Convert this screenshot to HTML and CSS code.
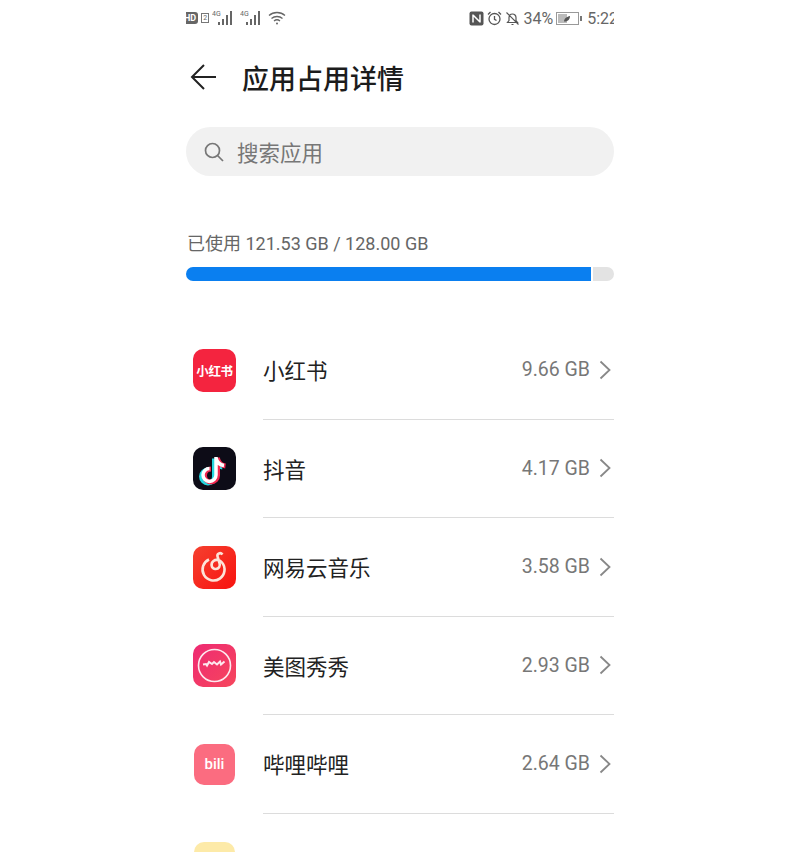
FILE: index.html
```html
<!DOCTYPE html>
<html lang="zh-CN">
<head>
    <meta charset="UTF-8">
    <title>应用占用详情</title>
    <link rel="stylesheet" href="styles.css">
</head>
<body>
    <div class="page">
        <!-- status bar -->
        <div class="status-bar">
            <div class="status-left">
                <span class="hd">HD</span>
                <span class="sim">2</span>
                <svg class="signal" width="25" height="16" viewBox="0 0 25 16"><text x="0" y="6" class="net">4G</text><path d="M7 12v3M11 9v6M15 5v10M19 1v14" stroke="#666" stroke-width="2" fill="none"/></svg>
                <svg class="signal" width="25" height="16" viewBox="0 0 25 16"><text x="0" y="6" class="net">4G</text><path d="M7 12v3M11 9v6M15 5v10M19 1v14" stroke="#666" stroke-width="2" fill="none"/></svg>
                <svg width="18" height="14" viewBox="0 0 18 14" fill="none" stroke="#666" stroke-width="1.3"><path d="M1 4.5c4.500-4 11.500-4 16 0M3.500 7.500c3-2.700 8-2.700 11 0M6 10c1.700-1.400 4.300-1.400 6 0"/><circle cx="9" cy="12.500" r="1" fill="#666" stroke="none"/></svg>
            </div>
            <div class="status-right">
                <svg width="15" height="15" viewBox="0 0 15 15"><rect x="0.500" y="0.500" width="14" height="14" rx="2" fill="#555"/><path d="M4 3.500v8M4 4l7 7M11 3.500v8" stroke="#fff" stroke-width="1.500" fill="none"/></svg>
                <svg width="15" height="15" viewBox="0 0 15 15" fill="none" stroke="#555" stroke-width="1.300"><circle cx="7.500" cy="8" r="5.500"/><path d="M7.500 5v3.300l2 1.200M1 3.500 3.500 1M14 3.500 11.500 1"/></svg>
                <svg width="15" height="15" viewBox="0 0 15 15" fill="none" stroke="#555" stroke-width="1.200"><path d="M2.500 11.500h10l-1.500-2V6.500a3.500 3.500 0 0 0-7 0v3zM6.500 13.500h2M1.500 1.500l12 12"/></svg>
                <span class="battery-text">34%</span>
                <svg width="26" height="13" viewBox="0 0 26 13"><rect x="0.500" y="0.500" width="22" height="12" fill="#fff" stroke="#999"/><rect x="2" y="2" width="9" height="9" fill="#bbb"/><path d="M8 9.500c0-3 3-5 6-5.500 0 3-2 5.500-5 5.500z" fill="#555"/><rect x="24" y="4" width="2" height="5" fill="#777"/></svg>
                <span class="clock">5:22</span>
            </div>
        </div>

        <div class="title-bar">
            <svg class="back" width="26" height="26" viewBox="0 0 26 26" fill="none" stroke="#222" stroke-width="2"><path d="M14 1 2 13l12 12M2 13h24"/></svg>
            <h1>应用占用详情</h1>
        </div>

        <div class="search-box">
            <svg width="20" height="20" viewBox="0 0 20 20" fill="none" stroke="#777" stroke-width="1.700"><circle cx="8.500" cy="8.500" r="7"/><path d="m13.500 13.500 5.500 5.500"/></svg>
            <span>搜索应用</span>
        </div>

        <div class="usage-text">已使用 121.53 GB / 128.00 GB</div>
        <div class="usage-bar">
            <div class="usage-fill"></div>
            <div class="usage-rest"></div>
        </div>

        <div class="app-list">
            <div class="app-row">
                <div class="app-icon icon-xhs">小红书</div>
                <div class="app-main">
                    <span class="app-name">小红书</span>
                    <span class="app-size">9.66 GB</span>
                    <svg class="chevron" width="12" height="20" viewBox="0 0 12 20" fill="none" stroke="#888" stroke-width="1.800"><path d="m1.500 1.500 9 8.500-9 8.500"/></svg>
                </div>
            </div>
            <div class="app-row">
                <div class="app-icon icon-douyin">
                    <svg width="43" height="43" viewBox="0 0 43 43" fill="none" stroke-width="5">
                        <path d="M23 10v18a6.500 6.500 0 1 1-6.500-6.500M23 11c1 4 4 7 8 7.500" stroke="#25d8e0" transform="translate(-1.500 1.500)"/>
                        <path d="M23 10v18a6.500 6.500 0 1 1-6.500-6.500M23 11c1 4 4 7 8 7.500" stroke="#f02850" transform="translate(1.500 .5)"/>
                        <path d="M23 10v18a6.500 6.500 0 1 1-6.500-6.500M23 11c1 4 4 7 8 7.500" stroke="#fff" stroke-width="3.500"/>
                    </svg>
                </div>
                <div class="app-main">
                    <span class="app-name">抖音</span>
                    <span class="app-size">4.17 GB</span>
                    <svg class="chevron" width="12" height="20" viewBox="0 0 12 20" fill="none" stroke="#888" stroke-width="1.800"><path d="m1.500 1.500 9 8.500-9 8.500"/></svg>
                </div>
            </div>
            <div class="app-row">
                <div class="app-icon icon-netease">
                    <svg width="43" height="43" viewBox="0 0 43 43" fill="none" stroke="#fde3d8" stroke-width="2.600">
                        <path d="M16 13.500a11 11 0 1 0 13 3c-2-2.500-6-3.500-8.500-1.500-3 2.300-2.500 7.500 1.500 8s5.500-3 4.500-6l-2-6.500c-.7-3 3-4.500 5-2"/>
                    </svg>
                </div>
                <div class="app-main">
                    <span class="app-name">网易云音乐</span>
                    <span class="app-size">3.58 GB</span>
                    <svg class="chevron" width="12" height="20" viewBox="0 0 12 20" fill="none" stroke="#888" stroke-width="1.800"><path d="m1.500 1.500 9 8.500-9 8.500"/></svg>
                </div>
            </div>
            <div class="app-row">
                <div class="app-icon icon-meitu">
                    <svg width="43" height="43" viewBox="0 0 43 43" fill="none" stroke="#fde8ee">
                        <circle cx="21.500" cy="21.500" r="16" stroke-width="1.600"/>
                        <path d="M10 20.500l3-.5 1 1.500 2-3.500 3 2 2-2 3 2.500 3-3 1 3 3.500-3" stroke-width="2"/>
                    </svg>
                </div>
                <div class="app-main">
                    <span class="app-name">美图秀秀</span>
                    <span class="app-size">2.93 GB</span>
                    <svg class="chevron" width="12" height="20" viewBox="0 0 12 20" fill="none" stroke="#888" stroke-width="1.800"><path d="m1.500 1.500 9 8.500-9 8.500"/></svg>
                </div>
            </div>
            <div class="app-row">
                <div class="app-icon icon-bili">bili</div>
                <div class="app-main">
                    <span class="app-name">哔哩哔哩</span>
                    <span class="app-size">2.64 GB</span>
                    <svg class="chevron" width="12" height="20" viewBox="0 0 12 20" fill="none" stroke="#888" stroke-width="1.800"><path d="m1.500 1.500 9 8.500-9 8.500"/></svg>
                </div>
            </div>
            <div class="app-row">
                <div class="app-icon icon-yellow"></div>
                <div class="app-main"></div>
            </div>
        </div>
    </div>
</body>
</html>
```

FILE: styles.css
```css
html, body {
    margin: 0;
    padding: 0;
    background: #fff;
}

body {
    font-family: "Noto Sans CJK SC", "Roboto", sans-serif;
    color: #222;
    height: 852px;
    overflow: hidden;
}

.page {
    width: 428px;
    height: 852px;
    margin: 0 auto;
    overflow: hidden;
}

.status-bar {
    display: flex;
    justify-content: space-between;
    align-items: center;
    height: 36px;
    margin: 0 -4px;
    color: #666;
    font-family: "Roboto", sans-serif;
}

.status-left, .status-right {
    display: flex;
    align-items: center;
    gap: 3px;
}

.hd {
    background: #666;
    color: #fff;
    font-size: 9px;
    font-weight: 700;
    line-height: 12px;
    padding: 0 2px;
    border-radius: 3px;
}

.sim {
    border: 1px solid #777;
    font-size: 7px;
    line-height: 8px;
    padding: 0 1px;
}

.net {
    font-size: 7px;
    fill: #666;
}

.battery-text, .clock {
    font-size: 16px;
}

.clock {
    margin-left: 2px;
}

.title-bar {
    display: flex;
    align-items: center;
    height: 82px;
    padding-left: 4px;
}

.title-bar h1 {
    margin: 0 0 0 26px;
    font-size: 27px;
    font-weight: 500;
    color: #1c1c1c;
}

.search-box {
    display: flex;
    align-items: center;
    gap: 13px;
    height: 49px;
    margin-top: 9px;
    padding-left: 18px;
    background: #f1f1f1;
    border-radius: 25px;
    font-size: 21.500px;
    color: #777;
}

.usage-text {
    margin-top: 55px;
    padding-left: 1px;
    font-family: "Roboto", "Noto Sans CJK SC", sans-serif;
    font-size: 18px;
    line-height: 26px;
    color: #666;
}

.usage-bar {
    display: flex;
    gap: 2px;
    height: 14px;
    margin-top: 10px;
}

.usage-fill {
    width: 405px;
    background: #0a7ff0;
    border-radius: 7px 0 0 7px;
}

.usage-rest {
    flex: 1;
    background: #e3e3e3;
    border-radius: 0 7px 7px 0;
}

.app-list {
    margin-top: 40px;
}

.app-row {
    display: flex;
    align-items: center;
    height: 98.500px;
}

.app-icon {
    flex: none;
    display: flex;
    align-items: center;
    justify-content: center;
    width: 43px;
    height: 43px;
    margin: 0 27px 0 7px;
    border-radius: 10px;
    overflow: hidden;
}

.icon-xhs {
    background: #f4243f;
    color: #fff;
    font-size: 12.500px;
    font-weight: 700;
    letter-spacing: -.3px;
}

.icon-douyin {
    background: #0d0c17;
}

.icon-netease {
    background: linear-gradient(135deg, #f5402f, #f8130f);
}

.icon-meitu {
    background: linear-gradient(135deg, #ee2a73, #f6465c);
}

.icon-bili {
    width: 41px;
    height: 41px;
    margin: 0 28px 0 8px;
    background: #fb6c80;
    color: #fff;
    font-family: "Roboto", sans-serif;
    font-size: 15px;
    font-weight: 500;
}

.icon-yellow {
    width: 41px;
    height: 41px;
    margin: 0 28px 0 8px;
    background: #fdeaa8;
}

.app-main {
    flex: 1;
    align-self: stretch;
    display: flex;
    align-items: center;
    border-bottom: 1px solid #dcdcdc;
    box-sizing: border-box;
}

.app-row:last-child .app-main {
    border-bottom: 0;
}

.app-name {
    flex: 1;
    font-size: 21.500px;
    color: #222;
}

.app-size {
    font-family: "Roboto", sans-serif;
    font-size: 19.500px;
    color: #777;
}

.chevron {
    margin: 0 3px 0 9px;
}
```
